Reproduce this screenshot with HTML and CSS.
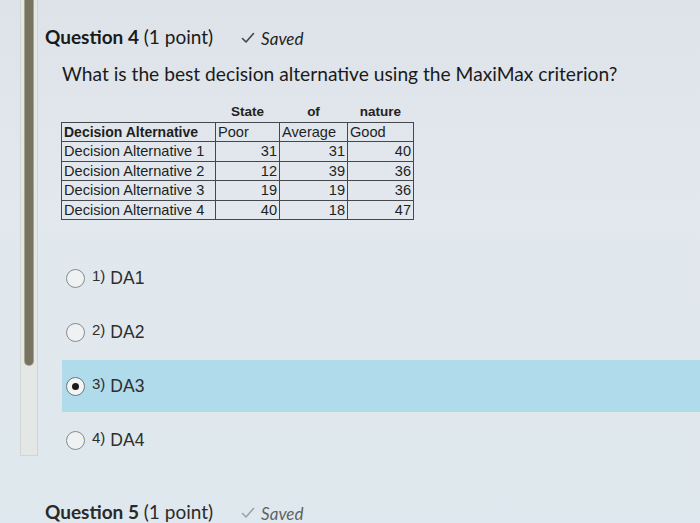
FILE: index.html
```html
<!DOCTYPE html>
<html lang="en">
<head>
<meta charset="utf-8">
<title>Quiz</title>
<link rel="stylesheet" href="styles.css">
</head>
<body>
<div class="page">
  <div class="rail">
    <div class="track"><div class="thumb"></div></div>
  </div>
  <main class="content">
    <div class="q-head">
      <span class="q-title"><b>Question 4</b> (1 point)</span>
      <span class="saved"><svg class="check" viewBox="0 0 14 12" width="14" height="12"><path d="M1.5 6.5 L5 10 L12.5 1.5" fill="none" stroke="currentColor" stroke-width="1.6" stroke-linecap="round" stroke-linejoin="round"/></svg>Saved</span>
    </div>
    <p class="q-text">What is the best decision alternative using the MaxiMax criterion?</p>

    <table class="grid">
      <colgroup>
        <col class="c1"><col class="c2"><col class="c3"><col class="c4">
      </colgroup>
      <tr class="caption-row">
        <td class="blank"></td>
        <td class="cap">State</td>
        <td class="cap">of</td>
        <td class="cap">nature</td>
      </tr>
      <tr class="head">
        <td class="bold">Decision Alternative</td>
        <td>Poor</td>
        <td>Average</td>
        <td>Good</td>
      </tr>
      <tr><td>Decision Alternative 1</td><td class="num">31</td><td class="num">31</td><td class="num">40</td></tr>
      <tr><td>Decision Alternative 2</td><td class="num">12</td><td class="num">39</td><td class="num">36</td></tr>
      <tr><td>Decision Alternative 3</td><td class="num">19</td><td class="num">19</td><td class="num">36</td></tr>
      <tr><td>Decision Alternative 4</td><td class="num">40</td><td class="num">18</td><td class="num">47</td></tr>
    </table>

    <div class="options">
      <label class="opt"><span class="radio"></span><span class="idx">1)</span><span class="val">DA1</span></label>
      <label class="opt"><span class="radio"></span><span class="idx">2)</span><span class="val">DA2</span></label>
      <label class="opt selected"><span class="radio on"></span><span class="idx">3)</span><span class="val">DA3</span></label>
      <label class="opt"><span class="radio"></span><span class="idx">4)</span><span class="val">DA4</span></label>
    </div>

    <div class="q-head next">
      <span class="q-title"><b>Question 5</b> (1 point)</span>
      <span class="saved light"><svg class="check" viewBox="0 0 14 12" width="14" height="12"><path d="M1.5 6.5 L5 10 L12.5 1.5" fill="none" stroke="currentColor" stroke-width="1.6" stroke-linecap="round" stroke-linejoin="round"/></svg>Saved</span>
    </div>
  </main>
</div>
</body>
</html>
```

FILE: styles.css
```css
html, body {
  margin: 0;
  padding: 0;
}
body {
  background: #e0e6eb;
  background-image: linear-gradient(180deg, #dde3e8 0%, #e2e8ed 40%, #dfe8ee 100%);
  width: 700px;
  height: 523px;
  overflow: hidden;
  color: #222;
}
.page {
  display: flex;
  align-items: flex-start;
  height: 523px;
}
.rail {
  width: 45px;
  flex: 0 0 45px;
}
.track {
  margin-left: 20px;
  width: 16px;
  height: 455px;
  border: 1px solid #d2d5cf;
  border-top: none;
  background: #e3e7e6;
}
.thumb {
  margin-left: 4px;
  width: 8px;
  height: 365px;
  background: #767361;
  border-radius: 0 0 4px 4px;
  box-shadow: 0 0 0 1px #a6a489;
}
.content {
  flex: 1;
  padding-top: 24px;
}
.q-head {
  display: flex;
  align-items: baseline;
  gap: 28px;
  font-family: Lato, "Liberation Sans", sans-serif;
  font-size: 19px;
  line-height: 25px;
  color: #1a1a1a;
}
.q-title b {
  font-weight: 700;
}
.saved {
  display: inline-flex;
  align-items: center;
  gap: 6px;
  font-style: italic;
  font-size: 17px;
  color: #222;
}
.saved .check {
  color: #444;
}
.saved.light {
  color: #5d6266;
}
.saved.light .check {
  color: #9aa3a8;
}
.q-text {
  margin: 10px 0 0 17px;
  font-family: Lato, "Liberation Sans", sans-serif;
  font-size: 19.2px;
  line-height: 25px;
  color: #1a1a1a;
}
.grid {
  margin: 15px 0 0 16px;
  border-collapse: collapse;
  font-family: "Liberation Sans", Arial, sans-serif;
  font-size: 14.6px;
  color: #1f1f1f;
  table-layout: fixed;
  width: 352px;
}
.c1 { width: 154px; }
.c2 { width: 64px; }
.c3 { width: 68px; }
.c4 { width: 66px; }
.grid td {
  border: 1px solid #45474d;
  padding: 0 2px;
  height: 18.6px;
  line-height: 18.6px;
  white-space: nowrap;
  overflow: hidden;
}
.grid .caption-row td {
  border: none;
  height: 21px;
  line-height: 21px;
  font-weight: 700;
  font-size: 13.5px;
  text-align: center;
  color: #222;
}
.grid td.bold {
  font-weight: 700;
  font-size: 14px;
}
.grid td.num {
  text-align: right;
}
.options {
  margin: 32px 0 0 17px;
  display: flex;
  flex-direction: column;
  gap: 2px;
}
.opt {
  display: flex;
  align-items: center;
  height: 52px;
  padding-left: 4px;
  font-family: "Liberation Sans", Arial, sans-serif;
  color: #2e2e2e;
}
.opt.selected {
  background: #b0dbeb;
}
.radio {
  width: 17px;
  height: 17px;
  border: 1.5px solid #858a8c;
  border-radius: 50%;
  background: #eef2f3;
  display: flex;
  align-items: center;
  justify-content: center;
  flex: 0 0 auto;
}
.radio.on {
  border-color: #6f7577;
  background: #f3f5f5;
}
.radio.on::after {
  content: "";
  width: 7px;
  height: 7px;
  border-radius: 50%;
  background: #1a1a1a;
}
.idx {
  margin-left: 7px;
  font-size: 15px;
  position: relative;
  top: -3px;
}
.val {
  margin-left: 5px;
  font-size: 17.5px;
}
.q-head.next {
  margin-top: 33px;
  color: #2a2a2a;
}
```
